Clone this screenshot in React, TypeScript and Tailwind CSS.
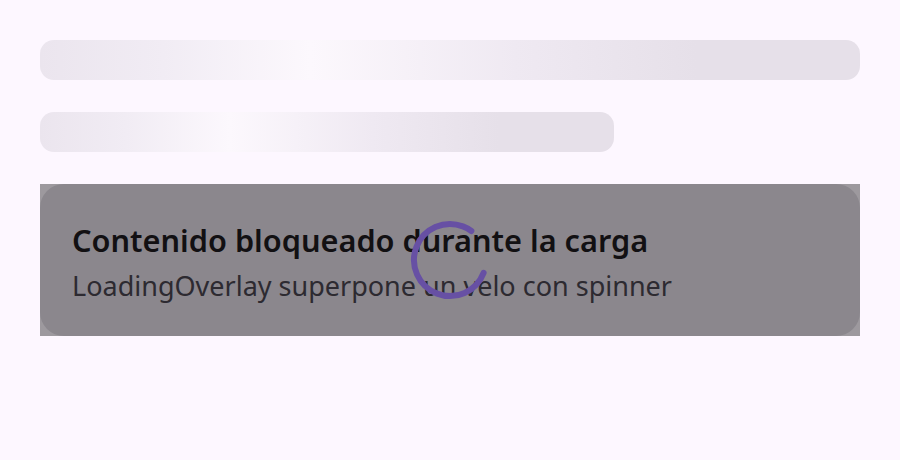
const shimmer =
  "bg-[linear-gradient(90deg,#ebe5ee_0%,#f1ecf4_15%,#fcf8fd_33%,#efe9f2_58%,#e6e0e9_80%,#e6e0e9_100%)]";

function SkeletonBar({ width }: { width: string }) {
  return <div className={`h-10 rounded-[14px] ${shimmer} ${width}`} />;
}

function Spinner() {
  // arc of ~285deg, open on the right side
  const r = 36;
  const c = 2 * Math.PI * r;
  const arc = (285 / 360) * c;
  return (
    <svg width="80" height="80" viewBox="0 0 80 80" className="block">
      <circle
        cx="40"
        cy="40"
        r={r}
        fill="none"
        stroke="#6750a4"
        strokeWidth="6"
        strokeLinecap="round"
        strokeDasharray={`${arc} ${c}`}
        transform="rotate(21 40 40)"
      />
    </svg>
  );
}

export default function App() {
  return (
    <div className="min-h-[460px] w-full bg-[#fdf7ff] px-10 pt-10 font-['Noto_Sans',sans-serif]">
      <div className="flex flex-col gap-8">
        <SkeletonBar width="w-full" />
        <SkeletonBar width="w-[70%]" />

        <div className="relative">
          <div className="rounded-3xl bg-[#e0dae4] px-8 pt-9 pb-8">
            <h3 className="text-[30.7px] font-semibold leading-[40px] text-[#1d1b20]">
              Contenido bloqueado durante la carga
            </h3>
            <p className="mt-2 text-[27px] leading-[36px] text-[#49454f]">
              LoadingOverlay superpone un velo con spinner
            </p>
          </div>
          <div className="absolute inset-0 flex items-center justify-center bg-black/[0.38]">
            <Spinner />
          </div>
        </div>
      </div>
    </div>
  );
}
